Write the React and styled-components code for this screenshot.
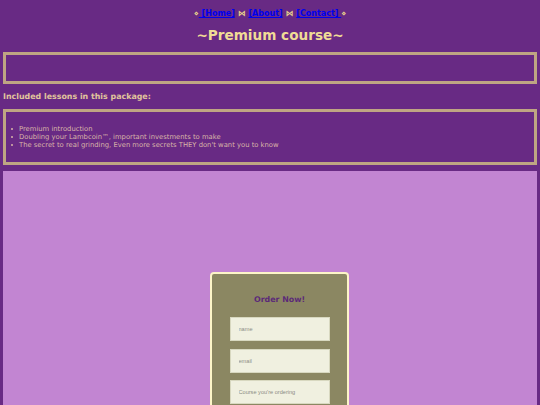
import React from 'react';
import styled, { createGlobalStyle } from 'styled-components';

const GlobalStyle = createGlobalStyle`
html, body {
  margin: 0;
  height: 405px;
  overflow: hidden;
  background: #682a84;
}
body {
  font-family: "DejaVu Sans", Verdana, sans-serif;
  color: #e0c49c;
}
`;

const Page = styled.div`
padding: 0 3px;
`;

const Nav = styled.nav`
height: 9px;
padding-top: 9px;
line-height: 9px;
font-size: 8px;
font-weight: bold;
text-align: center;
color: #e8d68c;
`;

const NavLink = styled.a`
color: #0000ee;
text-decoration: underline;
`;

const Title = styled.h1`
margin: 9px 0 0;
height: 25px;
line-height: 17px;
font-size: 13.6px;
font-weight: bold;
text-align: center;
color: #f0dc96;
`;

const Panel = styled.section`
box-sizing: border-box;
height: ${props => props.$height}px;
border: 3px solid #bfa583;
`;

const Subtitle = styled.h2`
margin: 0;
padding-top: 8px;
height: 25px;
box-sizing: border-box;
line-height: 10px;
font-size: 7.9px;
font-weight: bold;
color: #e0c49c;
`;

const Lessons = styled.ul`
margin: 0;
padding: 13px 0 0 5px;
list-style: none;
font-size: 6.8px;
line-height: 8px;
color: #d8b5a8;
`;

const Lesson = styled.li`
display: flex;
align-items: center;

&::before {
  content: '';
  width: 2px;
  height: 2px;
  margin-right: 6px;
  border-radius: 50%;
  background: #d8b5a8;
}
`;

const Showcase = styled.div`
display: flex;
justify-content: center;
margin-top: 6px;
padding: 101px 0 0 19px;
height: 300px;
box-sizing: border-box;
background: #c285d2;
`;

const OrderCard = styled.form`
display: flex;
flex-direction: column;
align-items: center;
box-sizing: border-box;
width: 139px;
height: 200px;
padding-top: 21px;
background: #8b8762;
border: 2px solid #fdf5c8;
border-radius: 4px;
`;

const OrderTitle = styled.h3`
margin: 0 0 12px;
height: 10px;
line-height: 10px;
font-size: 7.9px;
font-weight: bold;
color: #5b2a78;
`;

const Field = styled.input`
box-sizing: border-box;
width: 100px;
height: 24px;
margin-bottom: 7.5px;
padding: 0 8px;
border: 1px solid #d8d8c0;
border-radius: 0;
outline: none;
background: #f0f0e0;
font-family: "Liberation Sans", Arial, sans-serif;
font-size: 5.6px;

&::placeholder {
  color: #8c8c84;
}
`;

const lessons = [
  'Premium introduction',
  'Doubling your Lambcoin™, important investments to make',
  "The secret to real grinding, Even more secrets THEY don't want you to know",
];

const App = () => {
  return (
    <Page>
      <GlobalStyle />
      <Nav>
        ⋄<NavLink href='#'> [Home]</NavLink> ⋈ <NavLink href='#'>[About]</NavLink> ⋈ <NavLink href='#'>[Contact] </NavLink>⋄
      </Nav>
      <Title>~Premium course~</Title>
      <Panel $height={32} />
      <Subtitle>Included lessons in this package:</Subtitle>
      <Panel $height={56}>
        <Lessons>
          {lessons.map(lesson => (
            <Lesson key={lesson}>{lesson}</Lesson>
          ))}
        </Lessons>
      </Panel>
      <Showcase>
        <OrderCard>
          <OrderTitle>Order Now!</OrderTitle>
          <Field placeholder='name' />
          <Field placeholder='email' />
          <Field placeholder="Course you're ordering" />
        </OrderCard>
      </Showcase>
    </Page>
  );
};

export default App;
